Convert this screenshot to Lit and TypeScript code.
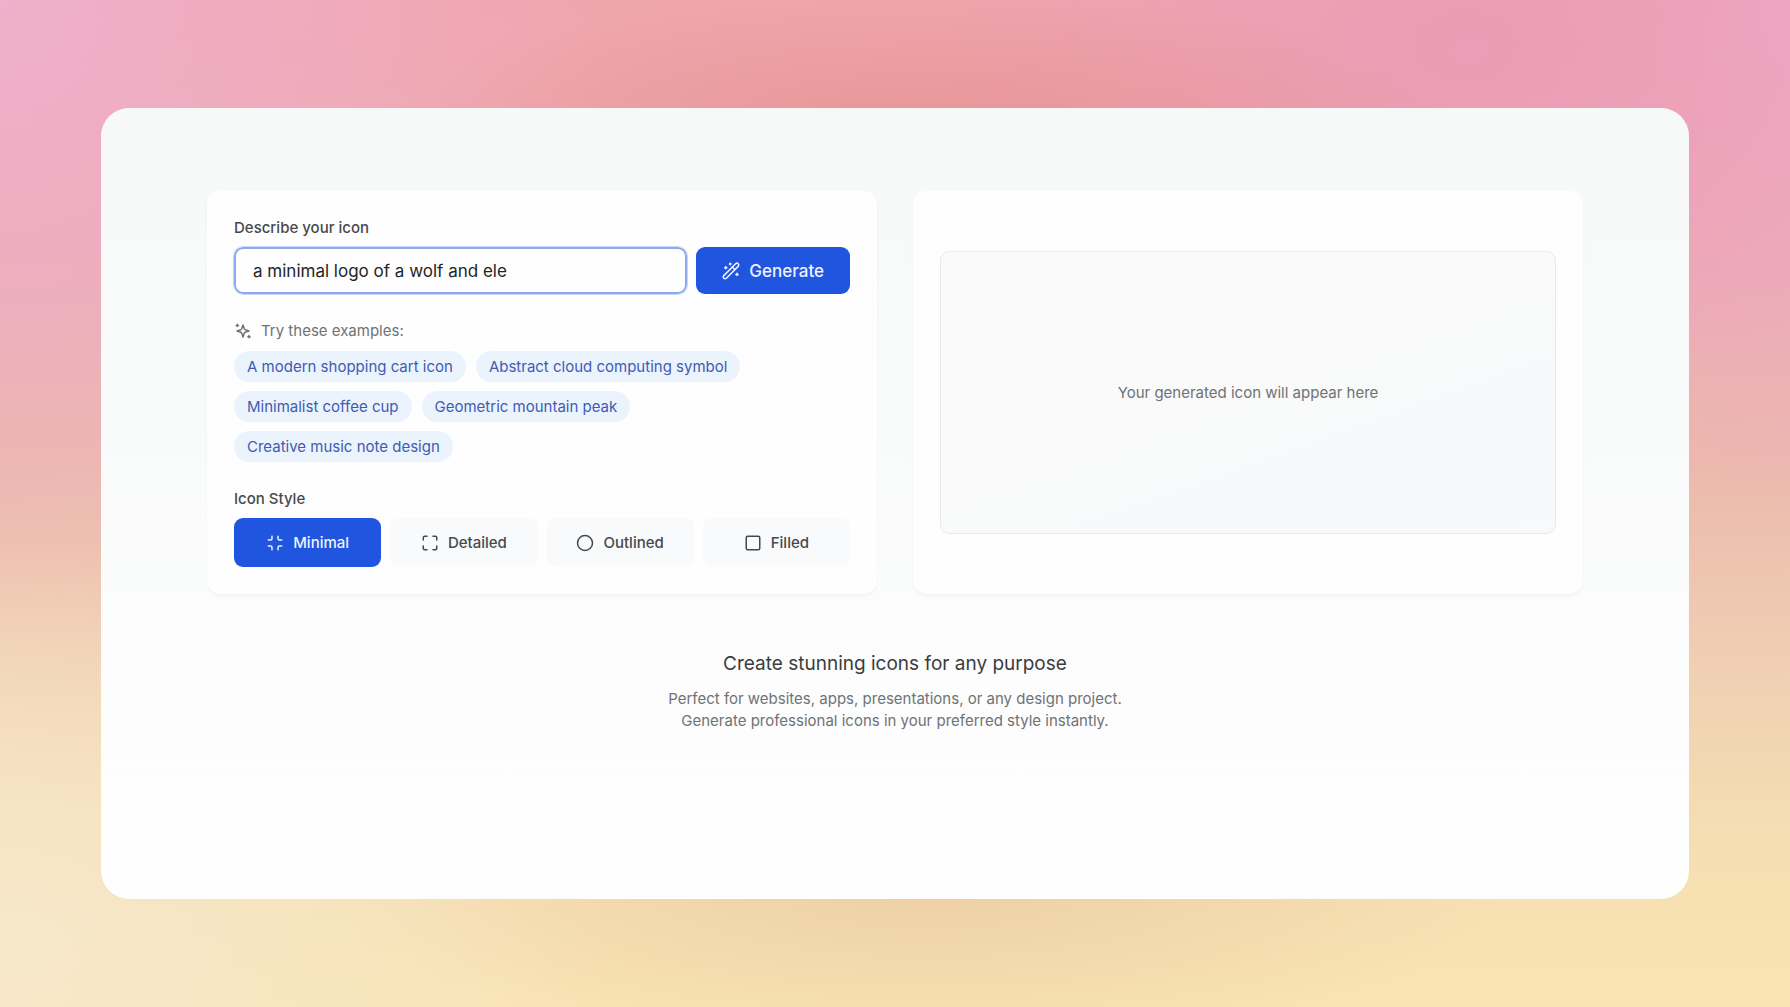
import { LitElement, html, css, svg } from "lit";
import { customElement, state } from "lit/decorators.js";
import { classMap } from "lit/directives/class-map.js";

const icon = (size: string, shapes: unknown) => html`<svg
  class=${size}
  viewBox="0 0 24 24"
  fill="none"
  stroke="currentColor"
  stroke-width="2"
  stroke-linecap="round"
  stroke-linejoin="round"
  aria-hidden="true"
>${shapes}</svg>`;

const wand = svg`
  <path d="M2.400 21.600a2.400 2.400 0 0 1 0-3.400L18.200 2.400a2.400 2.400 0 0 1 3.400 3.400L5.800 21.600a2.400 2.400 0 0 1-3.400 0Z"/>
  <path d="m14 7 3 3"/>
  <path d="M11 1.500v2M10 2.500h2M5 6v3M3.500 7.500h3M20 15v3M18.500 16.500h3"/>`;
const sparkles = svg`
  <path d="m12 4-1.700 5.100a2 2 0 0 1-1.200 1.200L4 12l5.100 1.700a2 2 0 0 1 1.200 1.200L12 20l1.700-5.100a2 2 0 0 1 1.200-1.200L20 12l-5.100-1.700a2 2 0 0 1-1.200-1.200Z"/>
  <path d="M4.500 3v3M3 4.500h3M20 18v3M18.500 19.500h3"/>`;
const minimize = svg`
  <path d="M8 3v3a2 2 0 0 1-2 2H3M21 8h-3a2 2 0 0 1-2-2V3M3 16h3a2 2 0 0 1 2 2v3M16 21v-3a2 2 0 0 1 2-2h3"/>`;
const maximize = svg`
  <path d="M8 3H5a2 2 0 0 0-2 2v3M21 8V5a2 2 0 0 0-2-2h-3M3 16v3a2 2 0 0 0 2 2h3M16 21h3a2 2 0 0 0 2-2v-3"/>`;
const circle = svg`<circle cx="12" cy="12" r="10"/>`;
const square = svg`<rect x="3" y="3" width="18" height="18" rx="2"/>`;

const EXAMPLES = [
  "A modern shopping cart icon",
  "Abstract cloud computing symbol",
  "Minimalist coffee cup",
  "Geometric mountain peak",
  "Creative music note design",
];

const STYLES = [
  { name: "Minimal", glyph: minimize },
  { name: "Detailed", glyph: maximize },
  { name: "Outlined", glyph: circle },
  { name: "Filled", glyph: square },
];

@customElement("app-root")
export class AppRoot extends LitElement {
  @state() private prompt = "a minimal logo of a wolf and ele";
  @state() private selected = "Minimal";

  static styles = css`
    :host {
      display: block;
      font-family: Inter, "Liberation Sans", sans-serif;
      font-size: 15px;
      line-height: 20px;
      color: #46494c;
    }
    * {
      box-sizing: border-box;
    }
    button,
    input {
      font: inherit;
      margin: 0;
    }
    button {
      border: 0;
      cursor: pointer;
    }
    .page {
      display: flex;
      min-height: 100vh;
      padding: 108px 101px;
      background:
        radial-gradient(ellipse 30% 14% at 52% 13%, #e48c8cb0 0%, #e48c8c00 100%),
        radial-gradient(ellipse 32% 18% at 52% 87%, #e8c09c90 0%, #e8c09c00 100%),
        radial-gradient(ellipse 30% 34% at 82% 5%, #ea9ab8d8 0%, #ea9ab800 100%),
        radial-gradient(ellipse 34% 60% at 0% 0%, #efb0cb 0%, #efb0cb00 100%),
        radial-gradient(ellipse 16% 50% at 100% 2%, #eeabc5 0%, #eeabc500 100%),
        radial-gradient(ellipse 34% 40% at 0% 94%, #f7e8cb 0%, #f7e8cb00 100%),
        linear-gradient(#f0a5ac 0%, #ecaaae 25%, #ebb9ac 46%, #f0cfb3 66%, #f5dfb2 84%, #f8e4b4 100%);
    }
    .panel {
      flex: 1;
      padding: 83px 106px;
      border-radius: 28px;
      background: linear-gradient(#f7f9f8 0%, #f9fbfa 40%, #fcfdfc 75%, #fdfefd 100%);
    }
    .cards {
      display: grid;
      grid-template-columns: 1fr 1fr;
      gap: 36px;
    }
    .card {
      padding: 27px;
      border-radius: 14px;
      background: #fefefe;
      box-shadow: 0 2px 3px #0000000a;
    }
    .label {
      display: block;
      margin: 0 0 9px;
      padding: 0;
      font-weight: 500;
    }
    .prompt-row {
      display: flex;
      gap: 9px;
    }
    .prompt {
      flex: 1;
      min-width: 0;
      height: 47px;
      padding: 0 17px;
      border: 2px solid #8ba9ec;
      border-radius: 9px;
      outline: 1px solid #c9daf7;
      background: #fefefe;
      color: #222528;
      font-size: 17px;
    }
    .generate {
      display: flex;
      align-items: center;
      gap: 9px;
      padding: 0 26px;
      border-radius: 9px;
      background: #2056df;
      color: #edf3ff;
      font-size: 17px;
      font-weight: 500;
    }
    .icon {
      flex: none;
      width: 18px;
      height: 18px;
    }
    .hint {
      display: flex;
      align-items: center;
      gap: 9px;
      margin: 27px 0 10px;
      color: #6f7276;
    }
    .chips {
      display: flex;
      flex-wrap: wrap;
      gap: 9px 10px;
    }
    .chip {
      height: 31px;
      padding: 0 13px;
      border-radius: 16px;
      background: #ebf3fc;
      color: #3f5bb5;
    }
    .styles {
      margin: 27px 0 0;
      padding: 0;
      border: 0;
    }
    .style-grid {
      display: grid;
      grid-template-columns: repeat(4, 1fr);
      gap: 9px;
    }
    .style {
      display: flex;
      align-items: center;
      justify-content: center;
      gap: 9px;
      height: 49px;
      border-radius: 9px;
      background: #f9fafb;
      color: #46494c;
      font-weight: 500;
    }
    .style.on {
      background: #2056df;
      color: #edf3ff;
    }
    .preview-card {
      display: flex;
      align-items: center;
    }
    .preview {
      display: grid;
      place-items: center;
      flex: 1;
      height: 283px;
      border: 1px solid #e6ebee;
      border-radius: 9px;
      background: linear-gradient(160deg, #f9faf9 0%, #f9faf9 50%, #f7f8fb 75%, #f7f9fc 100%);
      color: #6f7276;
    }
    .pitch {
      margin-top: 54px;
      text-align: center;
    }
    .title {
      margin: 0 0 8px;
      font-size: 19px;
      line-height: 32px;
      font-weight: 400;
      color: #3a3d40;
    }
    .text {
      margin: 0;
      line-height: 22px;
      color: #6f7276;
    }
  `;

  render() {
    return html`
      <div class="page">
        <main class="panel">
          <div class="cards">
            <section class="card">
              <label class="label" for="prompt">Describe your icon</label>
              <div class="prompt-row">
                <input
                  id="prompt"
                  class="prompt"
                  type="text"
                  .value=${this.prompt}
                  @input=${(e: Event) => (this.prompt = (e.target as HTMLInputElement).value)}
                />
                <button class="generate" type="button">${icon("icon", wand)}Generate</button>
              </div>
              <p class="hint">${icon("icon", sparkles)}Try these examples:</p>
              <div class="chips">
                ${EXAMPLES.map(
                  (text) => html`<button class="chip" type="button" @click=${() => (this.prompt = text)}>${text}</button>`
                )}
              </div>
              <fieldset class="styles">
                <legend class="label">Icon Style</legend>
                <div class="style-grid">
                  ${STYLES.map(
                    ({ name, glyph }) => html`<button
                      type="button"
                      class=${classMap({ style: true, on: name === this.selected })}
                      aria-pressed=${name === this.selected}
                      @click=${() => (this.selected = name)}
                    >${icon("icon", glyph)}${name}</button>`
                  )}
                </div>
              </fieldset>
            </section>
            <section class="card preview-card">
              <div class="preview">Your generated icon will appear here</div>
            </section>
          </div>
          <section class="pitch">
            <h1 class="title">Create stunning icons for any purpose</h1>
            <p class="text">
              Perfect for websites, apps, presentations, or any design project.<br />
              Generate professional icons in your preferred style instantly.
            </p>
          </section>
        </main>
      </div>
    `;
  }
}
